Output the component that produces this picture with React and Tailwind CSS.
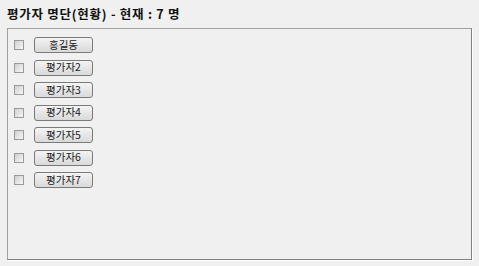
const names = ["홍길동", "평가자2", "평가자3", "평가자4", "평가자5", "평가자6", "평가자7"];

const App = () => {
  return (
    <div
      className="w-[479px] h-[266px] bg-[#f0f0f0] px-[7px] pt-[5px] flex flex-col"
      style={{ fontFamily: '"Noto Sans CJK KR", "Noto Sans", sans-serif' }}
    >
      {/* Title */}
      <h1 className="h-[23px] text-[12.5px] font-bold text-[#111] leading-[17px] tracking-[0.75px]">
        평가자 명단(현황) - 현재 : 7 명
      </h1>

      {/* Group panel */}
      <div className="w-[465px] h-[232px] border border-[#a0a0a0] border-r-[#808080] border-b-[#808080] shadow-[1px_1px_0_#ffffff] pl-[6px] pt-[8px] flex flex-col gap-[6.5px]">
        {names.map((name) => (
          <div key={name} className="flex items-center h-[16px]">
            <span className="w-[10px] h-[10px] border border-[#9a9a9a] bg-gradient-to-br from-[#d0d0d0] to-[#f6f6f6]" />
            <button className="ml-[10px] w-[59px] h-[16px] border border-[#7a7a7a] rounded-[3px] bg-gradient-to-b from-[#f4f4f4] to-[#d9d9d9] text-[10.5px] leading-none text-[#222] flex items-center justify-center">
              {name}
            </button>
          </div>
        ))}
      </div>
    </div>
  );
};

export default App;
